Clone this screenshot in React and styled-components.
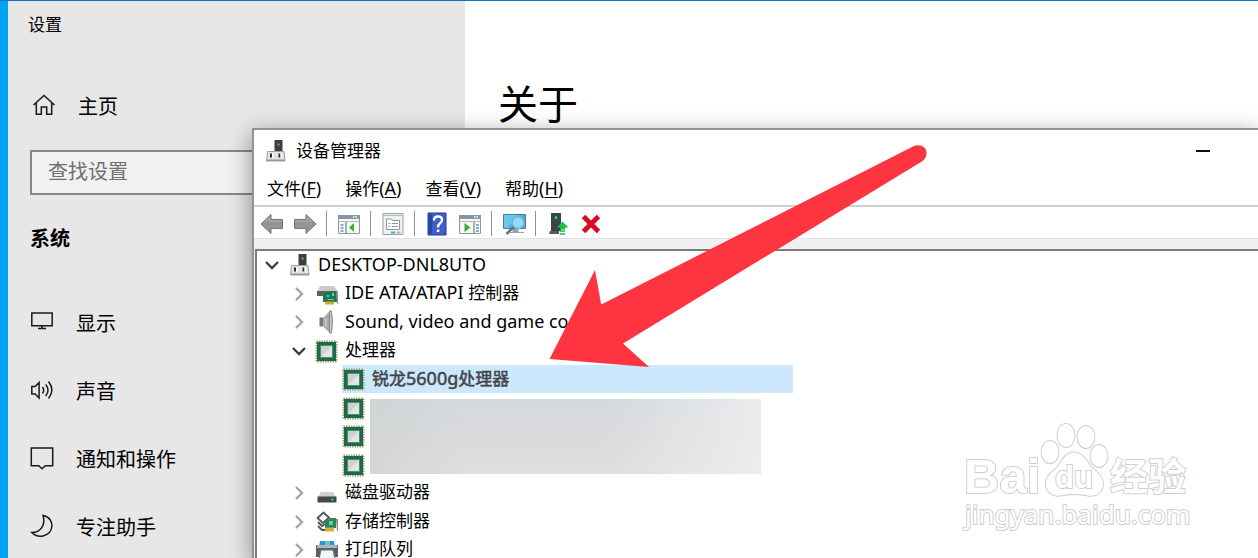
import React from "react";
import styled, { createGlobalStyle, css } from "styled-components";

const uiFont = `"Noto Sans", "Noto Sans CJK SC", sans-serif`;

const GlobalStyle = createGlobalStyle`
  * { box-sizing: border-box; }
  body { margin: 0; font-family: ${uiFont}; color: #000; }
  button, input { font: inherit; color: inherit; }
`;

const Desktop = styled.div`
  position: relative;
  height: 100vh;
  padding: 1px 0 0 8px;
  overflow: hidden;
  background: linear-gradient(#0a76c0 1px, #00a3f2 1px);
`;

const SettingsWindow = styled.div`
  display: flex;
  height: 100%;
  background: #fff;
`;

const Sidebar = styled.aside`
  flex: 0 0 457px;
  padding: 0 22px;
  background: #e7e7e8;
  font-size: 20px;
`;

const AppName = styled.div`
  height: 50px;
  margin-left: -2px;
  font-size: 17px;
  line-height: 48px;
`;

const NavLink = styled.a`
  display: flex;
  align-items: center;
  gap: 22px;
  height: 68px;
  color: inherit;
  text-decoration: none;
  svg { flex: none; }
`;

const HomeLink = styled(NavLink)`
  height: 112px;
  padding: 0 0 4px 2px;
`;

const SearchBox = styled.input`
  display: block;
  width: 100%;
  height: 45px;
  margin-top: -13px;
  padding: 0 16px 2px;
  border: 2px solid #858789;
  border-radius: 0;
  background: #f1f1f2;
  &::placeholder { color: #707070; opacity: 1; }
`;

const SectionTitle = styled.h2`
  height: 93px;
  margin: 0;
  font-size: 20px;
  line-height: 88px;
`;

const Main = styled.main`
  flex: 1;
  padding: 71px 33px;
`;

const PageTitle = styled.h1`
  margin: 0;
  font-size: 40px;
  font-weight: 400;
  line-height: 64px;
`;

const ManagerWindow = styled.section`
  position: absolute;
  inset: 128px 0 0 252px;
  display: flex;
  flex-direction: column;
  border: solid #939393;
  border-width: 2px 0 0 2px;
  background: #fff;
  box-shadow: 0 6px 22px rgba(0, 0, 0, 0.42);
  font-size: 17px;
`;

const Latin = styled.span`
  font-size: 18px;
`;

const TitleBar = styled.header`
  display: flex;
  align-items: center;
  gap: 8px;
  height: 42px;
  padding: 0 48px 0 10px;
`;

const WindowTitle = styled.span`
  flex: 1;
  padding-bottom: 3px;
`;

const CaptionButton = styled.button`
  display: grid;
  place-items: center;
  width: 14px;
  height: 24px;
  padding: 0;
  border: 0;
  background: none;
`;

const MenuBar = styled.nav`
  display: flex;
  gap: 24px;
  height: 35px;
  padding: 0 13px;
  border-bottom: 2px solid #cfcfcf;
`;

const MenuButton = styled.button`
  padding: 0 0 2px;
  border: 0;
  background: none;
  white-space: nowrap;
  u { text-underline-offset: 2px; text-decoration-thickness: 1px; }
`;

const Toolbar = styled.div`
  display: flex;
  align-items: center;
  height: 32px;
  padding: 2px 0 0 1px;
  border-bottom: 1px solid #e3e3e3;
`;

const ToolButton = styled.button`
  display: grid;
  place-items: center;
  width: 33px;
  height: 30px;
  padding: 0;
  border: 0;
  background: none;
`;

const Separator = styled.span`
  width: 1px;
  height: 25px;
  margin: 0 5px;
  background: #8f8f8f;
`;

const TreeFrame = styled.div`
  flex: 1;
  padding: 10px 0 0 1px;
  background: #f0f0f0;
  overflow: hidden;
`;

const Tree = styled.ul`
  height: 100%;
  margin: 0;
  padding: 0;
  border: solid #7c7c7e;
  border-width: 2px 0 0 2px;
  background: #fff;
  list-style: none;
`;

const TreeRow = styled.li`
  position: relative;
  display: flex;
  height: 28px;
  padding-left: ${({ $level }) => $level * 27}px;
  &:nth-child(even) { height: 29px; }
`;

const Twisty = styled.span`
  display: grid;
  place-items: center;
  width: 31px;
  padding-right: 2px;
`;

const RowContent = styled.span`
  display: flex;
  align-items: center;
  gap: 6px;
  white-space: nowrap;
  svg { flex: none; }
  ${({ $selected }) =>
    $selected &&
    css`
      width: 451px;
      background: #cce8ff;
      color: #444;
      -webkit-text-stroke: 0.5px #444;
    `}
`;

const Label = styled.span`
  padding-bottom: 2px;
  line-height: 24px;
`;

const Redaction = styled.span`
  position: absolute;
  z-index: 1;
  top: 6px;
  left: 113px;
  width: 391px;
  height: 75px;
  background:
    linear-gradient(90deg, rgba(205, 212, 210, 0.7), rgba(225, 225, 225, 0) 25%, rgba(235, 235, 235, 0) 60%, rgba(240, 240, 240, 0.8)),
    linear-gradient(#d2d9df, #dadada 45%, #dedede);
`;

const Arrow = styled.svg`
  position: absolute;
  top: 140px;
  left: 545px;
  pointer-events: none;
`;

const Watermark = styled.svg`
  position: absolute;
  top: 415px;
  left: 955px;
  pointer-events: none;
  overflow: visible;
`;

const Line = ({ children, w = 24, h = 24 }) => (
  <svg width={w} height={h} viewBox={`0 0 ${w} ${h}`} fill="none" stroke="#1a1a1a" strokeWidth="1.5">
    {children}
  </svg>
);

const HomeIcon = () => (
  <Line>
    <path d="M1.500 12 12 2.500 22.500 12M4.300 10V21.300h5v-7.300h5.400v7.300h5V10" />
  </Line>
);
const DisplayIcon = () => (
  <Line>
    <path d="M1.800 3h20.400v12.800H1.800zM12 15.800v2.600M8 18.400h8" />
  </Line>
);
const SoundIcon = () => (
  <Line>
    <path d="M1.800 8.500h3.300l4-4v15.500l-4-4H1.800zM12.500 9q2.400 3.200 0 6.500M15.700 6.500q4.600 5.700 0 11.500M18.500 3.500q6.800 8.700 0 17" />
  </Line>
);
const MessageIcon = () => (
  <Line>
    <path d="M1.300 2h21.400v17.700h-7.500l-3.200 3-3.200-3H1.300z" />
  </Line>
);
const MoonIcon = () => (
  <Line>
    <path d="M13 1.500C19.500 2.500 22.500 8 21.800 13c-1.200 9-13.500 12.300-20 5.500C10.500 18.500 16 11 13 1.500z" />
  </Line>
);

const ComputerIcon = () => (
  <svg width="24" height="24" viewBox="0 0 24 24">
    <path d="M10.500 1h8v12h-8z" fill="#3b3f40" />
    <path d="M13.500 4.500h2v2h-2z" fill="#7fae8c" />
    <path d="M3.500 12.500h16.500l1 9.500H2.500z" fill="#e3e3e3" stroke="#a0a0a0" />
    <path d="M3 20.500h18V22H3z" fill="#999" />
    <path d="M6 14.500h2v4H6zM14.500 14.500h2v4h-2z" fill="#2d2d2d" />
    <path d="M8 14.500h1.500v4H8zM16.500 14.500H18v4h-1.500z" fill="#fff" />
  </svg>
);

const ChipIcon = () => (
  <svg width="24" height="24" viewBox="0 -1 24 24">
    <path d="M1.500 1.500h20v20h-20z" fill="none" stroke="#9c9d60" strokeWidth="1.800" strokeDasharray="1.500 1" />
    <path d="M2 2h19v19H2z" fill="#1d6a4b" />
    <path d="M5.500 5.500h12v12h-12z" fill="#ccd2cf" stroke="#4f8a72" />
    <path d="M6 17 17 6v11z" fill="#e2e5e3" />
  </svg>
);

const IdeIcon = () => (
  <svg width="24" height="24" viewBox="0 -1 24 24">
    <path d="M5 3h14l4 6H2z" fill="#c9cbca" />
    <path d="M2 8h20v5H2z" fill="#5b6260" />
    <path d="M8 9h14v10H8z" fill="#1b7a55" />
    <path d="M12 12h2v2h-2zM17 10h2v3h-2zM13 16h6v1h-6z" fill="#75c39c" />
    <path d="M10 18.500h9v3h-9z" fill="#dda72a" />
    <path d="M21 9h2v12h-1z" fill="#8b9390" />
  </svg>
);

const SpeakerIcon = () => (
  <svg width="24" height="24" viewBox="0 0 24 24">
    <path d="M4.500 7.500h4v9h-4z" fill="#777" />
    <path d="M8.500 7.500 15 1v22l-6.500-6z" fill="#a9a9a9" />
    <path d="M14.500 1h2q2 11 0 22h-2z" fill="#c8c8c8" stroke="#888" strokeWidth="1" />
    <path d="M11 8v9" stroke="#ddd" />
  </svg>
);

const DriveIcon = () => (
  <svg width="24" height="24" viewBox="0 -1 24 24">
    <path d="M6 10h12l3 5H3z" fill="#cfcfcf" />
    <path d="M2.500 14.500h19v6h-19z" fill="#454748" />
    <path d="M16 16.500h2.500v2H16z" fill="#32d24d" />
  </svg>
);

const StorageIcon = () => (
  <svg width="24" height="24" viewBox="0 0 24 24">
    <path d="m2.500 8 6-5.500 5.500 5-6 5.500z" fill="#fff" stroke="#555" strokeWidth="1.800" />
    <path d="M3 12l4 4 3-2M3 16l4 4h4" fill="none" stroke="#555" strokeWidth="2" />
    <path d="M10 12l5-4h6v10H10z" fill="#28845c" />
    <path d="M14 11h4v4h-4z" fill="#79bd99" />
    <path d="M10 17.500h9v4h-9z" fill="#dcac34" />
    <path d="M21 9h2v12h-1z" fill="#858d89" />
  </svg>
);

const PrinterIcon = () => (
  <svg width="24" height="24" viewBox="0 -1 24 24">
    <path d="M5 2h14l1 6H4z" fill="#249bd7" />
    <path d="M10 2h5v5h-5z" fill="#63c8c1" />
    <path d="M1 6h22v12H1z" fill="#59605f" />
    <path d="M2 6h20v3H2z" fill="#b1b5b6" />
    <path d="M6 11h12l2 9H4z" fill="#eef5fb" stroke="#647480" />
  </svg>
);

const ArrowTool = ({ flip }) => (
  <svg width="24" height="22" viewBox="0 0 24 22">
    <path
      d={flip ? "M23 11 13 1.500v5H1.500v9H13v5z" : "M1 11 11 1.500v5h11.500v9H11v5z"}
      fill="#949494"
      stroke="#747474"
      strokeLinejoin="round"
    />
    <path d={flip ? "M2.500 8h12V5l4 4" : "M21.500 8h-12V5l-4 4"} fill="none" stroke="#b5b5b5" />
  </svg>
);

const PanelTool = ({ mirrored }) => (
  <svg width="24" height="22" viewBox="0 0 24 22">
    <path d="M1.500 2.500h21v18h-21z" fill="#f6f8f8" stroke="#8f979d" />
    <path d="M1 2h22v4H1z" fill="#8796a3" />
    <path d="M16 4h1.500M18.500 4H20" stroke="#fff" strokeWidth="1.500" />
    <path d="M1.500 8.500h21" stroke="#b2b9bd" />
    {mirrored ? (
      <>
        <path d="M16 9v11" stroke="#8f979d" strokeWidth="1.500" />
        <path d="M18 12h3M18 15h3M18 18h3" stroke="#6395bd" strokeWidth="1.500" />
        <path d="m6.500 10 6 4.500-6 4.500z" fill="#3eac38" />
      </>
    ) : (
      <>
        <path d="M9 9v11" stroke="#8f979d" strokeWidth="1.500" />
        <path d="M3.500 12h3M3.500 15h3M3.500 18h3" stroke="#6395bd" strokeWidth="1.500" />
        <path d="m17 10-5 4.500 5 4.500z" fill="#35b32b" />
      </>
    )}
  </svg>
);

const PropertiesTool = () => (
  <svg width="22" height="24" viewBox="0 0 22 24">
    <path d="M1 1.500h20v21H1z" fill="#f0f1f1" stroke="#999fa3" />
    <path d="M1.500 3.500h19" stroke="#b4b9bc" />
    <path d="M4.500 8.500V7h5l1 1.500h7v9h-13z" fill="#fff" stroke="#8d979d" />
    <path d="M6.500 11.500h2M10 11.500h6M6.500 14.500h2M10 14.500h6" stroke="#7d98ab" />
    <path d="M9 20.500h4" stroke="#31b4d8" strokeWidth="2" />
    <path d="M14.500 20.500h4" stroke="#aeb3b5" strokeWidth="2" />
  </svg>
);

const HelpTool = () => (
  <svg width="20" height="24" viewBox="0 0 20 24">
    <path d="M1 1h18v22H1z" fill="#3c5fcb" stroke="#24388d" />
    <path d="M2 2h3v20H2z" fill="#2a45a4" />
    <path d="M7 8.500q0-4 4-4t4 3.500q0 2-2.200 3.500-1.800 1.300-1.800 4" fill="none" stroke="#fff" strokeWidth="2.300" />
    <path d="M9.800 17.500h2.500V20H9.800z" fill="#fff" />
  </svg>
);

const ScanTool = () => (
  <svg width="26" height="24" viewBox="0 0 26 24">
    <path d="M2.500 2.500h22v14h-22z" fill="#42b4e4" stroke="#54798b" />
    <path d="M3 3h15L7 16H3z" fill="#69c8ef" />
    <path d="M12 17h5v3h-5zM9 20.500h14" fill="#99a2a6" stroke="#99a2a6" />
    <circle cx="17" cy="10.500" r="6" fill="#8fdcf8" stroke="#6fb4d0" strokeWidth="1.500" />
    <path d="m12.500 15-7 7" stroke="#657178" strokeWidth="2.500" />
  </svg>
);

const UpdateTool = () => (
  <svg width="22" height="24" viewBox="0 0 22 24">
    <path d="M4 1h10v18H4z" fill="#3e4344" />
    <path d="M6 4h5v5H6z" fill="#255e3d" />
    <path d="M8 4.500h2v2H8z" fill="#52e77d" />
    <path d="M3 19h9v3H2z" fill="#555a5b" />
    <path d="m15.500 9.500 6 6h-3.500v2h-5v-2H9.500z" fill="#20bd45" />
    <path d="M13 19h5M13 22h5" stroke="#20bd45" strokeWidth="1.700" />
  </svg>
);

const RemoveTool = () => (
  <svg width="20" height="20" viewBox="0 0 20 20">
    <path d="m2.500 2.500 15 15M17.500 2.500l-15 15" stroke="#dc0a1c" strokeWidth="4.800" />
  </svg>
);

const Chevron = ({ open }) => (
  <svg width="16" height="16" viewBox="0 0 16 16" fill="none" strokeWidth="2.300">
    {open ? <path d="m2 5 6 6 6-6" stroke="#3c3c3c" /> : <path d="m5 2 6 6-6 6" stroke="#a3a3a3" />}
  </svg>
);

const navItems = [
  ["显示", DisplayIcon],
  ["声音", SoundIcon],
  ["通知和操作", MessageIcon],
  ["专注助手", MoonIcon],
];

const menus = [["文件", "F"], ["操作", "A"], ["查看", "V"], ["帮助", "H"]];

const tools = [
  ["后退", <ArrowTool />],
  ["前进", <ArrowTool flip />],
  null,
  ["显示/隐藏控制台树", <PanelTool />],
  null,
  ["属性", <PropertiesTool />],
  null,
  ["帮助", <HelpTool />],
  ["显示/隐藏操作窗格", <PanelTool mirrored />],
  null,
  ["扫描检测硬件改动", <ScanTool />],
  null,
  ["更新驱动程序", <UpdateTool />],
  ["卸载设备", <RemoveTool />],
];

const devices = [
  { level: 0, open: true, icon: ComputerIcon, text: <Latin>DESKTOP-DNL8UTO</Latin> },
  { level: 1, open: false, icon: IdeIcon, text: <><Latin>IDE ATA/ATAPI </Latin>控制器</> },
  { level: 1, open: false, icon: SpeakerIcon, text: <Latin>Sound, video and game controllers</Latin> },
  { level: 1, open: true, icon: ChipIcon, text: "处理器" },
  { level: 2, icon: ChipIcon, text: <>锐龙<Latin>5600g</Latin>处理器</>, selected: true },
  { level: 2, icon: ChipIcon, redacted: true },
  { level: 2, icon: ChipIcon },
  { level: 2, icon: ChipIcon },
  { level: 1, open: false, icon: DriveIcon, text: "磁盘驱动器" },
  { level: 1, open: false, icon: StorageIcon, text: "存储控制器" },
  { level: 1, open: false, icon: PrinterIcon, text: "打印队列" },
];

export default function App() {
  return (
    <Desktop>
      <GlobalStyle />
      <SettingsWindow>
        <Sidebar>
          <AppName>设置</AppName>
          <HomeLink href="#home"><HomeIcon />主页</HomeLink>
          <SearchBox type="search" aria-label="查找设置" placeholder="查找设置" />
          <SectionTitle>系统</SectionTitle>
          {navItems.map(([label, Icon]) => (
            <NavLink key={label} href={`#${label}`}><Icon />{label}</NavLink>
          ))}
        </Sidebar>
        <Main><PageTitle>关于</PageTitle></Main>
      </SettingsWindow>

      <ManagerWindow>
        <TitleBar>
          <ComputerIcon />
          <WindowTitle>设备管理器</WindowTitle>
          <CaptionButton aria-label="最小化">
            <svg width="14" height="2"><path d="M0 0h14v2H0z" fill="#111" /></svg>
          </CaptionButton>
        </TitleBar>
        <MenuBar>
          {menus.map(([label, key]) => (
            <MenuButton key={key}>{label}<Latin>(<u>{key}</u>)</Latin></MenuButton>
          ))}
        </MenuBar>
        <Toolbar>
          {tools.map((tool, i) =>
            tool ? <ToolButton key={i} aria-label={tool[0]}>{tool[1]}</ToolButton> : <Separator key={i} />
          )}
        </Toolbar>
        <TreeFrame>
          <Tree>
            {devices.map(({ level, open, icon: Icon, text, selected, redacted }, i) => (
              <TreeRow key={i} $level={level}>
                <Twisty>{open !== undefined && <Chevron open={open} />}</Twisty>
                <RowContent $selected={selected}><Icon />{text && <Label>{text}</Label>}</RowContent>
                {redacted && <Redaction />}
              </TreeRow>
            ))}
          </Tree>
        </TreeFrame>
      </ManagerWindow>

      <Watermark width="240" height="120" viewBox="0 0 240 120" fill="#fff" stroke="#cfcfcf" strokeWidth="2" paintOrder="stroke">
        <text x="9" y="78" fontFamily="Liberation Sans" fontWeight="700" fontSize="49">Bai</text>
        <ellipse cx="95" cy="37" rx="8.500" ry="11" />
        <ellipse cx="111" cy="20.500" rx="8.500" ry="11.500" />
        <ellipse cx="131" cy="22" rx="8.500" ry="11" />
        <ellipse cx="144" cy="41" rx="8.500" ry="11" />
        <path d="M119 37.500c8 0 12 7 17 14 5 5 12 10 12 17 0 10-8 13-15 12-9-2-19-2-28 0-7 1-14-3-14-12 0-8 7-12 12-17 5-7 8-14 16-14z" />
        <text x="100" y="73" fontFamily="Liberation Sans" fontWeight="700" fontSize="31">du</text>
        <text x="155" y="75" fontFamily="Noto Sans CJK SC" fontWeight="700" fontSize="38">经验</text>
        <text x="10" y="109" fontFamily="Noto Sans" fontSize="26">jingyan.baidu.com</text>
      </Watermark>

      <Arrow width="390" height="235" viewBox="0 0 390 235">
        <path d="M4.500 219 50 130l6.200 34.500L368 6.500c9-4 17 3 12 12q-1.500 2-4 3.500L78 203.500l26 23.500z" fill="#fe3540" />
      </Arrow>
    </Desktop>
  );
}
